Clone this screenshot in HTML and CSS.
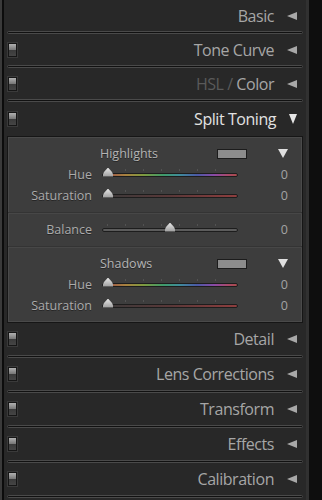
FILE: index.html
```html
<!DOCTYPE html>
<html lang="en">
<head>
    <meta charset="UTF-8">
    <title>Develop panels</title>
    <link rel="stylesheet" href="styles.css">
</head>
<body>
    <div class="panel">
        <div class="head">
            <span class="title">Basic</span>
            <span class="arrow left"></span>
        </div>
        <div class="groove"></div>

        <div class="head">
            <span class="switch"></span>
            <span class="title">Tone Curve</span>
            <span class="arrow left"></span>
        </div>
        <div class="groove"></div>

        <div class="head">
            <span class="switch"></span>
            <span class="title"><span class="dim">HSL / </span>Color</span>
            <span class="arrow left"></span>
        </div>
        <div class="groove"></div>

        <div class="head open">
            <span class="switch"></span>
            <span class="title">Split Toning</span>
            <span class="arrow down"></span>
        </div>
        <div class="box">
            <div class="section">
                <div class="subhead">
                    <span class="subtitle">Highlights</span>
                    <span class="swatch"></span>
                    <span class="arrow down small"></span>
                </div>
                <div class="row">
                    <span class="label">Hue</span>
                    <div class="track hue"><span class="thumb min"></span></div>
                    <span class="value">0</span>
                </div>
                <div class="row">
                    <span class="label">Saturation</span>
                    <div class="track sat"><span class="thumb min"></span></div>
                    <span class="value">0</span>
                </div>
            </div>
            <div class="section">
                <div class="row">
                    <span class="label">Balance</span>
                    <div class="track plain"><span class="thumb mid"></span></div>
                    <span class="value">0</span>
                </div>
            </div>
            <div class="section">
                <div class="subhead">
                    <span class="subtitle">Shadows</span>
                    <span class="swatch"></span>
                    <span class="arrow down small"></span>
                </div>
                <div class="row">
                    <span class="label">Hue</span>
                    <div class="track hue"><span class="thumb min"></span></div>
                    <span class="value">0</span>
                </div>
                <div class="row">
                    <span class="label">Saturation</span>
                    <div class="track sat"><span class="thumb min"></span></div>
                    <span class="value">0</span>
                </div>
            </div>
        </div>

        <div class="head low">
            <span class="switch"></span>
            <span class="title">Detail</span>
            <span class="arrow left"></span>
        </div>
        <div class="groove"></div>

        <div class="head low">
            <span class="switch"></span>
            <span class="title">Lens Corrections</span>
            <span class="arrow left"></span>
        </div>
        <div class="groove"></div>

        <div class="head low">
            <span class="switch"></span>
            <span class="title">Transform</span>
            <span class="arrow left"></span>
        </div>
        <div class="groove"></div>

        <div class="head low">
            <span class="switch"></span>
            <span class="title">Effects</span>
            <span class="arrow left"></span>
        </div>
        <div class="groove"></div>

        <div class="head low">
            <span class="switch"></span>
            <span class="title">Calibration</span>
            <span class="arrow left"></span>
        </div>
        <div class="groove"></div>
    </div>
</body>
</html>
```

FILE: styles.css
```css
body{
    margin: 0;
    padding: 0;
    background-color: #0e0e0e;
    font-family: "Open Sans", "Liberation Sans", sans-serif;
    overflow: hidden;
}
.panel{
    width: 302px;
    height: 500px;
    background-color: #282828;
    border-left: 2px solid #3a3a3a;
    border-right: 3px solid #313131;
    box-shadow: inset 2px 0 0 #0c0c0c;
    padding-left: 2px;
}

/* panel headers */
.head{
    display: flex;
    align-items: center;
    height: 31px;
    padding: 0 9px 0 4px;
}
.head.low{
    height: 32px;
}
.head.open{
    height: 34px;
}
.switch{
    width: 7px;
    height: 12px;
    border: 1px solid #161616;
    background: linear-gradient(#b0b0b0, #767676 50%, #3a3a3a 50%, #454545);
    box-shadow: 0 0 0 1px #3a3a3a;
}
.title{
    flex: 1;
    text-align: right;
    font-size: 16px;
    color: #a6a6a6;
    letter-spacing: -0.45px;
    margin-right: 13px;
}
.open .title{
    color: #e2e2e2;
}
.dim{
    color: #5a5a5a;
}
.arrow{
    width: 0;
    height: 0;
}
.arrow.left{
    border-top: 4.5px solid transparent;
    border-bottom: 4.5px solid transparent;
    border-right: 10px solid #a8a8a8;
}
.arrow.down{
    border-left: 4.5px solid transparent;
    border-right: 4.5px solid transparent;
    border-top: 10px solid #e6e6e6;
}
.arrow.down.small{
    border-left-width: 5px;
    border-right-width: 5px;
    border-top: 9px solid #e0e0e0;
    margin-right: 14px;
}

.groove{
    height: 1px;
    margin: 0 3px;
    background-color: #111;
    border: 1px solid #4a4a4a;
    border-radius: 2px;
}

/* split toning content */
.box{
    margin: 0 3px;
    background-color: #3d3d3d;
    border: 1px solid #161616;
    box-shadow: inset 0 0 0 1px #4a4a4a;
}
.section{
    padding: 6px 0 6px;
    border-top: 1px solid #343434;
}
.section:first-child{
    border-top: none;
}
.section + .section{
    box-shadow: inset 0 1px 0 #474747;
}
.subhead{
    display: flex;
    align-items: center;
    height: 21px;
    padding-left: 92px;
}
.subtitle{
    flex: 1;
    font-size: 12.5px;
    color: #b4b4b4;
    text-shadow: 0 1px 0 #262626;
}
.swatch{
    width: 28px;
    height: 8px;
    background-color: #8c8c8c;
    border: 1px solid #1c1c1c;
    margin-right: 31px;
}
.row{
    display: flex;
    align-items: center;
    height: 21px;
}
.label{
    width: 84px;
    text-align: right;
    font-size: 12.5px;
    color: #ababab;
    text-shadow: 0 1px 0 #262626;
    margin-right: 10px;
}
.value{
    flex: 1;
    text-align: right;
    padding-right: 14px;
    font-size: 12.5px;
    color: #a3a3a3;
}
.track{
    position: relative;
    width: 134px;
    height: 2px;
    border: 1px solid #1d1d1d;
    border-radius: 2px;
}
.track::before{
    content: "";
    position: absolute;
    left: 4px;
    right: 4px;
    top: -5px;
    height: 2px;
    background: repeating-linear-gradient(90deg, #525252 0 1px, transparent 1px 18px);
}
.track.hue{
    background: linear-gradient(90deg, #9a4b4b, #a8813f 17%, #7f9a3f 30%, #3f9a6a 45%, #3f8c9a 57%, #4a5aa6 70%, #8a4aa6 83%, #a84a6a 93%, #a84a4a);
}
.track.sat{
    background: linear-gradient(90deg, #3a3a3a, #5a3838 50%, #8e3e3e);
}
.track.plain{
    background-color: #5c5c5c;
}
.thumb{
    position: absolute;
    top: -6px;
    width: 10px;
    height: 9px;
    margin-left: -5px;
    background: linear-gradient(#e6e6e6, #9c9c9c);
    clip-path: polygon(50% 0, 90% 50%, 100% 75%, 100% 100%, 0 100%, 0 75%, 10% 50%);
}
.thumb.min{
    left: 5px;
}
.thumb.mid{
    left: 50%;
}
```
